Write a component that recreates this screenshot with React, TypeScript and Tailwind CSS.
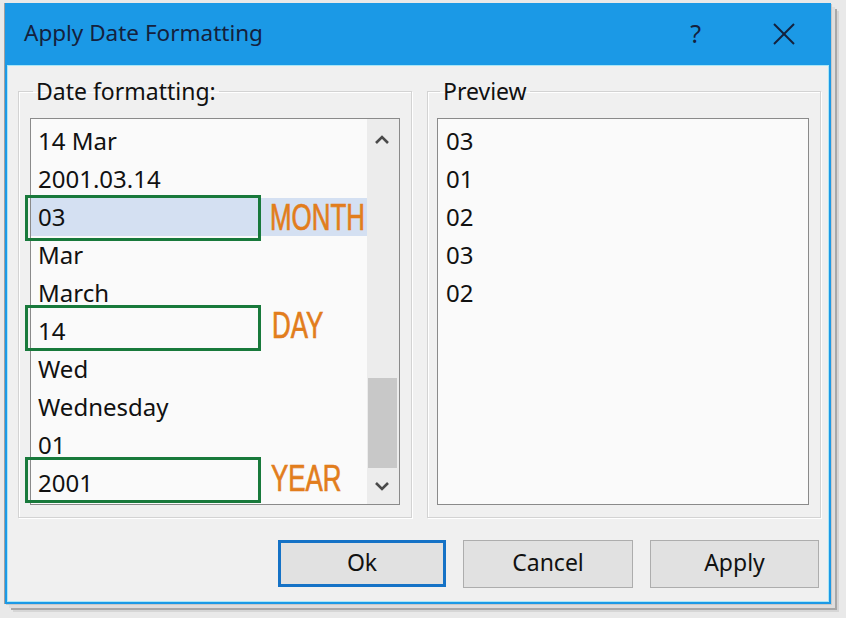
import React from "react";

const font = { fontFamily: '"Noto Sans", "Open Sans", sans-serif' };
const annotFont = { fontFamily: '"Liberation Sans", Arial, sans-serif' };

const leftItems = ["14 Mar", "2001.03.14", "03", "Mar", "March", "14", "Wed", "Wednesday", "01", "2001"];
const previewItems = ["03", "01", "02", "03", "02"];

function Chevron({ up }: { up?: boolean }) {
  return (
    <svg width="16" height="11" viewBox="0 0 16 11">
      <polyline
        points={up ? "2,9 8,3 14,9" : "2,2 8,8 14,2"}
        fill="none"
        stroke="#4a4a4a"
        strokeWidth="2.6"
      />
    </svg>
  );
}

const labelCls =
  "inline-block origin-left scale-x-[0.72] text-[36px] leading-none text-[#e27d1c] [-webkit-text-stroke:0.7px_#e27d1c]";

function Annot({ idx }: { idx: number }) {
  if (idx === 2)
    return (
      <>
        <div className="absolute left-[-6px] top-[-3px] w-[236px] h-[46px] border-[3px] border-[#18793b]" />
        <div className="absolute left-[239px] top-[1px] h-full flex items-center">
          <span className={labelCls} style={annotFont}>MONTH</span>
        </div>
      </>
    );
  if (idx === 5)
    return (
      <>
        <div className="absolute left-[-6px] top-[-7px] w-[236px] h-[46px] border-[3px] border-[#18793b]" />
        <div className="absolute left-[241px] top-[-5px] h-full flex items-center">
          <span className={labelCls} style={annotFont}>DAY</span>
        </div>
      </>
    );
  if (idx === 9)
    return (
      <>
        <div className="absolute left-[-6px] top-[-7px] w-[236px] h-[46px] border-[3px] border-[#18793b]" />
        <div className="absolute left-[240px] top-[-4px] h-full flex items-center">
          <span className={labelCls} style={annotFont}>YEAR</span>
        </div>
      </>
    );
  return null;
}

export default function App() {
  return (
    <div className="w-[846px] h-[618px] bg-[#e9e9e9] pt-[3px] pl-[5px] overflow-hidden" style={font}>
      <div className="w-[826px] h-[601px] bg-[#1b99e6] flex flex-col shadow-[1px_1px_0_#c8c8c8,4px_4px_0_#dedede,6px_6px_0_#a8a8a8,8px_8px_0_#d6d6d6,-1px_0_0_#a0a0a0]">
        {/* Title bar */}
        <div className="h-[62px] flex items-center pl-[19px] text-[#14213d]">
          <span className="text-[22.5px] leading-none pb-[2px]">Apply Date Formatting</span>
          <span className="ml-auto text-[25px] leading-none pb-[2px] mr-[72px]">?</span>
          <svg width="22" height="22" viewBox="0 0 22 22" className="mr-[36px]">
            <line x1="1" y1="1" x2="21" y2="21" stroke="#14213d" strokeWidth="2" />
            <line x1="21" y1="1" x2="1" y2="21" stroke="#14213d" strokeWidth="2" />
          </svg>
        </div>
        {/* Client */}
        <div className="flex-1 mx-[2px] mb-[2px] bg-[#f0f0f0] border border-[#a9e6f7] pl-[10px] pt-[10px] flex flex-col">
          <div className="flex gap-[15px]">
            {/* Date formatting group */}
            <fieldset className="w-[394px] h-[442px] border border-[#d3d3d3] shadow-[inset_1px_1px_0_#ffffff,1px_1px_0_#ffffff] px-[11px] pb-[13px]">
              <legend className="ml-[3px] px-[3px] text-[23px] leading-[30px] text-[#111]">Date formatting:</legend>
              <div className="mt-[12px] w-[370px] h-[387px] border border-[#8a8a8a] bg-[#fafafa] flex">
                <div className="flex-1 pt-[3px]">
                  {leftItems.map((t, i) => (
                    <div
                      key={i}
                      className={`relative h-[38px] flex items-center pl-[7px] text-[24px] text-[#111] ${i === 2 ? "bg-[#d4e0f2]" : ""}`}
                    >
                      <span className="leading-none">{t}</span>
                      <Annot idx={i} />
                    </div>
                  ))}
                </div>
                <div className="w-[32px] bg-[#ececec] flex flex-col">
                  <div className="h-[40px] flex items-center justify-center pr-[2px]">
                    <Chevron up />
                  </div>
                  <div className="flex-1" />
                  <div className="h-[90px] ml-[1px] mr-[2px] bg-[#c8c8c8]" />
                  <div className="h-[36px] flex items-center justify-center pr-[2px]">
                    <Chevron />
                  </div>
                </div>
              </div>
            </fieldset>
            {/* Preview group */}
            <fieldset className="w-[394px] h-[442px] border border-[#d3d3d3] shadow-[inset_1px_1px_0_#ffffff,1px_1px_0_#ffffff] pl-[9px] pb-[13px]">
              <legend className="ml-[3px] px-[3px] text-[23px] leading-[30px] text-[#111]">Preview</legend>
              <div className="mt-[12px] w-[372px] h-[387px] border border-[#8a8a8a] bg-[#fafafa] pt-[3px]">
                {previewItems.map((t, i) => (
                  <div key={i} className="h-[38px] flex items-center pl-[8px] text-[24px] text-[#111]">
                    <span className="leading-none">{t}</span>
                  </div>
                ))}
              </div>
            </fieldset>
          </div>
          {/* Buttons */}
          <div className="mt-[22px] flex gap-[17px] pl-[260px]">
            <button className="w-[168px] h-[47px] bg-[#e1e1e1] border-[3px] border-[#1572c6] text-[23px] text-[#111] leading-none pb-[3px]">Ok</button>
            <button className="w-[170px] h-[48px] bg-[#e1e1e1] border border-[#adadad] text-[23px] text-[#111] leading-none pb-[3px]">Cancel</button>
            <button className="w-[169px] h-[48px] bg-[#e1e1e1] border border-[#adadad] text-[23px] text-[#111] leading-none pb-[3px]">Apply</button>
          </div>
        </div>
      </div>
    </div>
  );
}
